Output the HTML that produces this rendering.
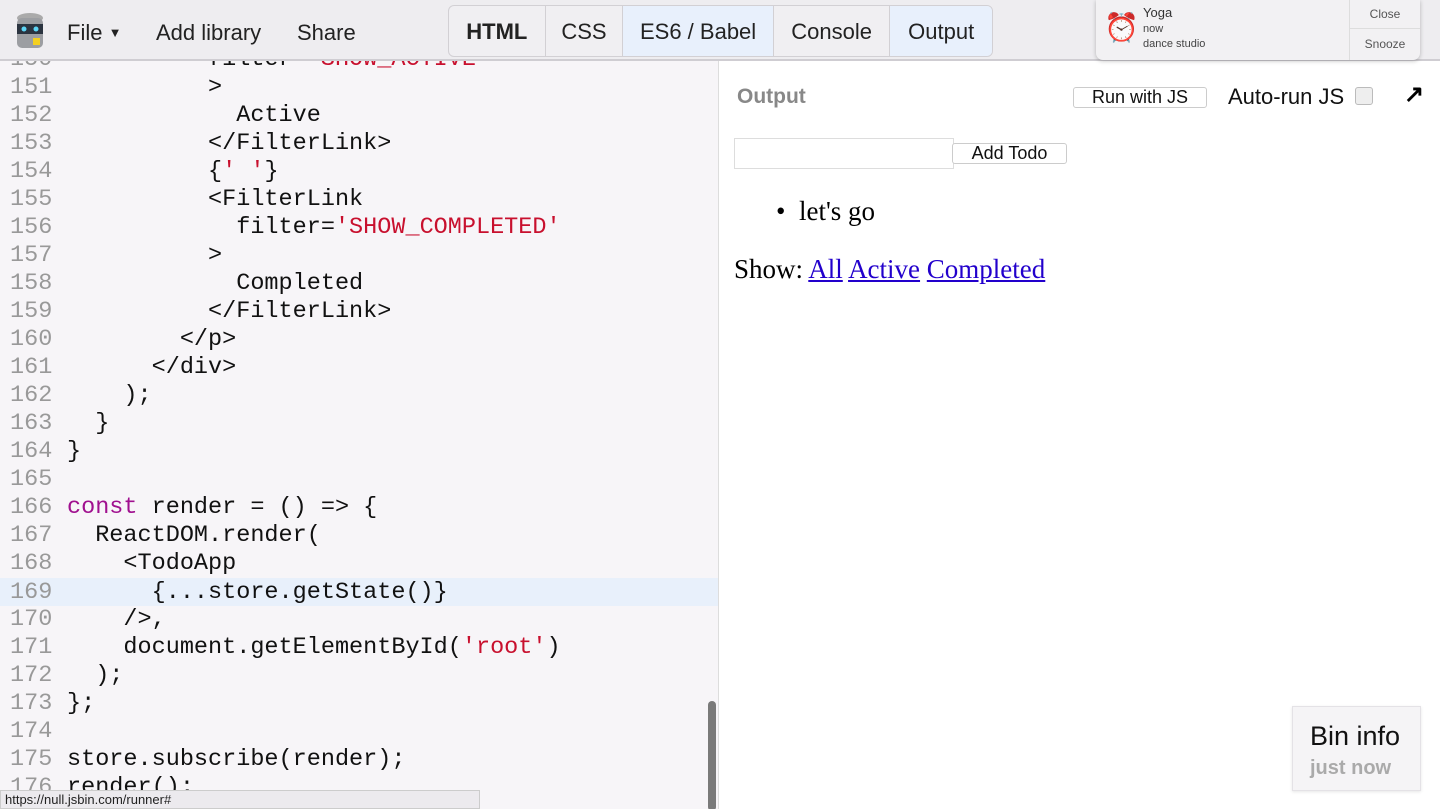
<!DOCTYPE html>
<html><head><meta charset="utf-8"><style>
*{margin:0;padding:0;box-sizing:border-box}
body{width:1440px;height:809px;overflow:hidden;background:#fff;font-family:"Liberation Sans",sans-serif;position:relative}
#top{position:absolute;left:0;top:0;width:1440px;height:61px;background:#eeedf0;border-bottom:2px solid #cfcdd2}
.m{position:absolute;top:20px;font-size:22px;color:#222}
#tabs{position:absolute;left:448px;top:5px;width:545px;height:52px;border:1px solid #d2d0d4;border-radius:6px;overflow:hidden;display:flex;background:#f0eff2}
#tabs div{height:100%;font-size:22px;color:#222;display:flex;align-items:center;justify-content:center;border-right:1px solid #d2d0d4;padding-top:2px}
#tabs .on{background:#e8f0fc}
#ed{position:absolute;left:0;top:61px;width:719px;height:748px;background:#f7f5f8;overflow:hidden;border-right:1px solid #ddd}
.l{position:absolute;left:0;height:28px;width:719px;font-family:"Liberation Mono",monospace;font-size:23.5px;line-height:30px;color:#111;white-space:pre}
.n{display:inline-block;width:67px;padding-left:10px;color:#999}
.k{color:#a0108f}.s{color:#c8102e}
.hl{background:#e8f0fb}
</style></head><body>
<div id="ed">
<div class="l" style="top:-16px"><span class="n">150</span>          filter=<span class="s">'SHOW_ACTIVE'</span></div>
<div class="l" style="top:12px"><span class="n">151</span>          &gt;</div>
<div class="l" style="top:40px"><span class="n">152</span>            Active</div>
<div class="l" style="top:68px"><span class="n">153</span>          &lt;/FilterLink&gt;</div>
<div class="l" style="top:96px"><span class="n">154</span>          {<span class="s">' '</span>}</div>
<div class="l" style="top:124px"><span class="n">155</span>          &lt;FilterLink</div>
<div class="l" style="top:152px"><span class="n">156</span>            filter=<span class="s">'SHOW_COMPLETED'</span></div>
<div class="l" style="top:180px"><span class="n">157</span>          &gt;</div>
<div class="l" style="top:208px"><span class="n">158</span>            Completed</div>
<div class="l" style="top:236px"><span class="n">159</span>          &lt;/FilterLink&gt;</div>
<div class="l" style="top:264px"><span class="n">160</span>        &lt;/p&gt;</div>
<div class="l" style="top:292px"><span class="n">161</span>      &lt;/div&gt;</div>
<div class="l" style="top:320px"><span class="n">162</span>    );</div>
<div class="l" style="top:348px"><span class="n">163</span>  }</div>
<div class="l" style="top:376px"><span class="n">164</span>}</div>
<div class="l" style="top:404px"><span class="n">165</span></div>
<div class="l" style="top:432px"><span class="n">166</span><span class="k">const</span> render = () =&gt; {</div>
<div class="l" style="top:460px"><span class="n">167</span>  ReactDOM.render(</div>
<div class="l" style="top:488px"><span class="n">168</span>    &lt;TodoApp</div>
<div class="l hl" style="top:517px"><span class="n">169</span>      {...store.getState()}</div>
<div class="l" style="top:544px"><span class="n">170</span>    /&gt;,</div>
<div class="l" style="top:572px"><span class="n">171</span>    document.getElementById(<span class="s">'root'</span>)</div>
<div class="l" style="top:600px"><span class="n">172</span>  );</div>
<div class="l" style="top:628px"><span class="n">173</span>};</div>
<div class="l" style="top:656px"><span class="n">174</span></div>
<div class="l" style="top:684px"><span class="n">175</span>store.subscribe(render);</div>
<div class="l" style="top:712px"><span class="n">176</span>render();</div>
<div style="position:absolute;left:708px;top:640px;width:8px;height:110px;background:#7a7a7a;border-radius:4px"></div>
</div>
<div style="position:absolute;left:0;top:790px;width:480px;height:19px;background:#eceaee;border:1px solid #ccc;font-size:13px;line-height:17px;padding-left:4px;color:#222">https://null.jsbin.com/runner#</div>

<div id="top">
<svg style="position:absolute;left:14px;top:12px" width="32" height="40" viewBox="0 0 32 40"><ellipse cx="16" cy="6" rx="13" ry="5" fill="#aaa"/><rect x="3" y="6" width="26" height="30" rx="5" fill="#9c9ea2"/><rect x="3" y="12" width="26" height="10" fill="#2b3440"/><circle cx="10" cy="17" r="2.5" fill="#5dd5f5"/><circle cx="22" cy="17" r="2.5" fill="#5dd5f5"/><rect x="19" y="26" width="7" height="7" fill="#f4d020"/></svg>
<div class="m" style="left:67px">File <span style="font-size:13px;vertical-align:3px">▼</span></div>
<div class="m" style="left:156px">Add library</div>
<div class="m" style="left:297px">Share</div>
<div id="tabs">
<div style="width:97px;font-weight:bold">HTML</div>
<div style="width:78px">CSS</div>
<div class="on" style="width:151px">ES6 / Babel</div>
<div style="width:117px">Console</div>
<div class="on" style="width:102px;border-right:none">Output</div>
</div>
</div>
<div style="position:absolute;left:1096px;top:0;width:324px;height:60px;background:#f2f1f3;border-radius:0 0 7px 7px;box-shadow:0 1px 4px rgba(0,0,0,.25)">
<div style="position:absolute;left:8px;top:12px;font-size:28px;line-height:32px;color:#d22">⏰</div>
<div style="position:absolute;left:47px;top:5px;font-size:13px;color:#333">Yoga</div>
<div style="position:absolute;left:47px;top:23px;font-size:11px;color:#444">now</div>
<div style="position:absolute;left:47px;top:38px;font-size:11px;color:#444">dance studio</div>
<div style="position:absolute;left:253px;top:0;width:71px;height:60px;border-left:1px solid #ddd"><div style="height:29px;border-bottom:1px solid #ddd;text-align:center;line-height:29px;font-size:12px;color:#555">Close</div><div style="text-align:center;line-height:30px;font-size:12px;color:#555">Snooze</div></div>
</div>

<div style="position:absolute;left:737px;top:85px;font-size:21px;font-weight:bold;color:#888">Output</div>
<div style="position:absolute;left:1073px;top:87px;width:134px;height:21px;border:1px solid #ccc;border-radius:3px;background:#fff;font-size:18px;line-height:19px;text-align:center;color:#111">Run with JS</div>
<div style="position:absolute;left:1228px;top:84px;font-size:22px;color:#111">Auto-run JS</div>
<div style="position:absolute;left:1355px;top:87px;width:18px;height:18px;border:1px solid #bbb;border-radius:3px;background:#eee"></div>
<div style="position:absolute;left:1404px;top:80px;font-size:24px;font-weight:bold">↗</div>

<div style="position:absolute;left:734px;top:138px;width:220px;height:31px;border:1px solid #ddd;background:#fff"></div>
<div style="position:absolute;left:952px;top:143px;width:115px;height:21px;border:1px solid #ccc;border-radius:3px;background:#fff;font-size:18px;line-height:19px;text-align:center;color:#111">Add Todo</div>
<div style="position:absolute;left:776px;top:196px;font-family:'Liberation Serif',serif;font-size:27px">•&nbsp;&nbsp;let's go</div>
<div style="position:absolute;left:734px;top:254px;font-family:'Liberation Serif',serif;font-size:27px">Show: <u style="color:#2200cc">All</u> <u style="color:#2200cc">Active</u> <u style="color:#2200cc">Completed</u></div>

<div style="position:absolute;left:1292px;top:706px;width:129px;height:85px;background:#f5f4f6;border:1px solid #e4e2e6;box-shadow:0 1px 3px rgba(0,0,0,.1)">
<div style="position:absolute;left:17px;top:14px;font-size:27px;color:#111">Bin info</div>
<div style="position:absolute;left:17px;top:50px;font-size:20px;font-weight:bold;color:#aaa">just now</div>
</div>
</body></html>
